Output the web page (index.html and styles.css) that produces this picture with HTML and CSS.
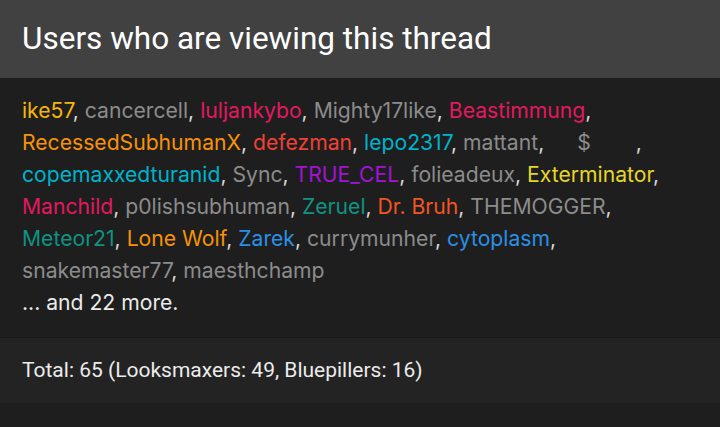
FILE: index.html
```html
<!DOCTYPE html>
<html lang="en">
<head>
  <meta charset="UTF-8" />
  <meta name="viewport" content="width=device-width, initial-scale=1" />
  <title>Users who are viewing this thread</title>
  <link rel="stylesheet" href="styles.css">
</head>
<body>
  <div class="block">
    <h3 class="block-header">Users who are viewing this thread</h3>

    <div class="block-body">
      <ul class="user-list">
        <li><a class="u u-gold">ike57</a>, </li>
        <li><a class="u">cancercell</a>, </li>
        <li><a class="u u-pink">luljankybo</a>, </li>
        <li><a class="u">Mighty17like</a>, </li>
        <li><a class="u u-pink">Beastimmung</a>, </li>
        <li><a class="u u-orange">RecessedSubhumanX</a>, </li>
        <li><a class="u u-red">defezman</a>, </li>
        <li><a class="u u-cyan">lepo2317</a>, </li>
        <li><a class="u">mattant</a>, </li>
        <li><a class="u u-odd">$</a>, </li>
        <li><a class="u u-cyan">copemaxxedturanid</a>, </li>
        <li><a class="u">Sync</a>, </li>
        <li><a class="u u-purple">TRUE_CEL</a>, </li>
        <li><a class="u">folieadeux</a>, </li>
        <li><a class="u u-yellow">Exterminator</a>, </li>
        <li><a class="u u-pink">Manchild</a>, </li>
        <li><a class="u">p0lishsubhuman</a>, </li>
        <li><a class="u u-teal">Zeruel</a>, </li>
        <li><a class="u u-deep">Dr. Bruh</a>, </li>
        <li><a class="u">THEMOGGER</a>, </li>
        <li><a class="u u-teal">Meteor21</a>, </li>
        <li><a class="u u-orange">Lone Wolf</a>, </li>
        <li><a class="u u-blue">Zarek</a>, </li>
        <li><a class="u">currymunher</a>, </li>
        <li><a class="u u-blue">cytoplasm</a>, </li>
        <li><a class="u">snakemaster77</a>, </li>
        <li><a class="u">maesthchamp</a></li>
      </ul>
      <div class="more">... and 22 more.</div>
    </div>

    <div class="block-footer">
      Total: 65 (Looksmaxers: 49, Bluepillers: 16)
    </div>
  </div>
</body>
</html>
```

FILE: styles.css
```css
body {
  margin: 0;
  background: #1e1e1e;
  font-family: Roboto, "Liberation Sans", sans-serif;
  color: #e6e6e6;
}
.block {
  width: 100%;
}
.block-header {
  margin: 0;
  height: 78px;
  box-sizing: border-box;
  padding: 20px 22px 0;
  background: #414141;
  color: #fff;
  font-size: 31.5px;
  font-weight: 400;
  line-height: 38px;
}
.block-body {
  padding: 17px 22px 18px;
  font-family: Inter, "Noto Sans", sans-serif;
  font-size: 21.15px;
  line-height: 32px;
}
.user-list {
  margin: 0;
  padding: 0;
  list-style: none;
}
.user-list li {
  display: inline;
  color: #d8d8d8;
}
.u {
  color: #8c8c8c;
}
.u-gold { color: #f3b60c; }
.u-pink { color: #e3195f; }
.u-orange { color: #f7920a; }
.u-red { color: #ef4136; }
.u-cyan { color: #00b3cc; }
.u-purple { color: #a313d6; }
.u-yellow { color: #e7d52b; }
.u-teal { color: #0f9383; }
.u-deep { color: #f25524; }
.u-blue { color: #2b8fe6; }
/* name made of blank glyphs, only the "$" shows */
.u-odd {
  padding: 0 45px 0 27px;
}
.more {
  color: #eaeaea;
}
.block-footer {
  height: 66px;
  box-sizing: border-box;
  padding: 19px 22px 0;
  background: #232323;
  border-top: 1px solid #1a1a1a;
  color: #ececec;
  font-size: 21px;
  line-height: 26px;
}
```
